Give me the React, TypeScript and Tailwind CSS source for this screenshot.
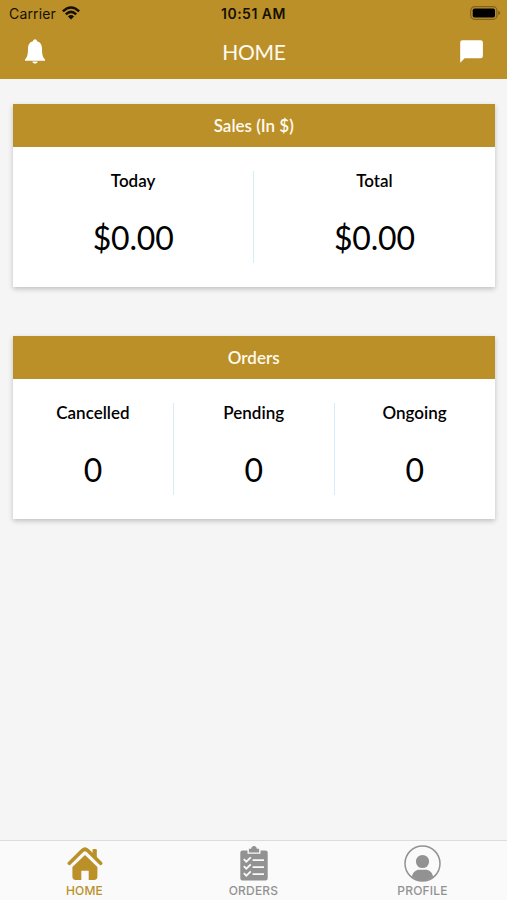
import React from "react";

function WifiIcon() {
  return (
    <svg width="18" height="14" viewBox="0 0 18 14" fill="none" stroke="#151003" strokeWidth="2.5">
      <path d="M0.9 5.3 Q9 -2.4 17.1 5.3" />
      <path d="M3.8 8.3 Q9 3.4 14.2 8.3" />
      <path d="M9 13.6 L5.9 10.4 Q9 7.8 12.1 10.4 Z" fill="#151003" stroke="none" />
    </svg>
  );
}

function BatteryIcon() {
  return (
    <svg width="31" height="14" viewBox="0 0 31 14">
      <rect x="0.7" y="0.7" width="26.2" height="12.6" rx="3.8" fill="none" stroke="#80621d" strokeWidth="1.2" />
      <rect x="2.7" y="2.5" width="22.3" height="9" rx="1.8" fill="#000" />
      <path d="M28.2 4.8 Q30.3 5.6 30.3 7 T28.2 9.2Z" fill="#80621d" />
    </svg>
  );
}

function BellIcon() {
  return (
    <svg width="20" height="25" viewBox="0 0 20 25" fill="#fff">
      <path d="M8 2.3 C8 -0.4 12 -0.4 12 2.3 C15.6 3.3 16.9 6 17 9.7 C17.1 15.7 17.5 17.7 20 20.4 V21.8 H0 V20.4 C2.5 17.7 2.9 15.7 3 9.7 C3.1 6 4.4 3.3 8 2.3Z" />
      <path d="M7.4 22.4 H12.6 C12.3 25.2 7.7 25.2 7.4 22.4Z" />
    </svg>
  );
}

function ChatIcon() {
  return (
    <svg width="23" height="23" viewBox="0 0 23 23" fill="#fff">
      <path d="M2.3 0.3 H20.7 Q22.9 0.3 22.9 2.5 V16 Q22.9 18.2 20.7 18.2 H4.7 L0.2 22.7 V2.5 Q0.2 0.3 2.3 0.3Z" />
    </svg>
  );
}

function HomeIcon() {
  return (
    <svg width="36" height="35" viewBox="0 0 36 35" fill="#bb9028">
      <path d="M2.4 17.3 L15.5 4.3 Q18 2.2 20.5 4.3 L33.6 17.3" fill="none" stroke="#bb9028" strokeWidth="3.7" strokeLinecap="round" />
      <path d="M25.5 4 Q25.5 3 26.7 3 H28.6 Q29.8 3 29.8 4.2 V13 L25.5 9Z" />
      <path d="M18 9 L30.4 21 V30.6 Q30.4 34 27 34 H21.7 V24.8 H14.3 V34 H8.8 Q5.4 34 5.4 30.6 V21Z" />
    </svg>
  );
}

function OrdersIcon() {
  return (
    <svg width="28" height="35" viewBox="0 0 28 35" fill="#929292">
      <path d="M2.5 4.4 H7.5 V7.8 H20.5 V4.4 H25.5 Q27.7 4.4 27.7 6.6 V32.3 Q27.7 34.5 25.5 34.5 H2.5 Q0.3 34.5 0.3 32.3 V6.6 Q0.3 4.4 2.5 4.4Z" />
      <path d="M8.9 2.8 H11.2 Q11.6 0 14 0 T16.8 2.8 H19.1 V6.6 H8.9Z" />
      <g fill="none" stroke="#fafafa" strokeWidth="1.8">
        <path d="M3.8 13.2 L6.3 15.7 L10.8 11.3 M12.6 14.2 H24 M3.8 20.2 L6.3 22.7 L10.8 18.3 M12.6 21.2 H24 M3.8 27.2 L6.3 29.7 L10.8 25.3 M12.6 28.2 H24" />
      </g>
    </svg>
  );
}

function ProfileIcon() {
  return (
    <svg width="37" height="37" viewBox="0 0 37 37">
      <circle cx="18.5" cy="18.5" r="17.5" fill="none" stroke="#929292" strokeWidth="1.5" />
      <circle cx="18.5" cy="16.5" r="6.6" fill="#929292" />
      <path d="M7.8 31.6 C9.2 26.8 11.8 24.7 15.4 24.7 H21.6 C25.2 24.7 27.8 26.8 29.2 31.6 Q18.5 40.5 7.8 31.6Z" fill="#929292" />
    </svg>
  );
}

type Stat = { label: string; value: string };

function StatCard({ title, stats }: { title: string; stats: Stat[] }) {
  return (
    <section className="bg-white shadow-[0_2px_5px_rgba(0,0,0,0.22)]">
      <h2 className="flex h-[43px] items-center justify-center bg-[#bb9028] pt-px text-[17px] font-semibold text-[#fffaf0]">
        {title}
      </h2>
      <div className="flex h-[140px] py-6">
        {stats.map((stat, i) => (
          <div
            key={stat.label}
            className={`flex flex-1 flex-col items-center text-black ${i > 0 ? "border-l border-[#d5ecfb]" : ""}`}
          >
            <div className="text-[17px] leading-5 font-semibold">{stat.label}</div>
            <div className="mt-[26px] text-[32px] leading-[42px] tracking-[-0.2px]">{stat.value}</div>
          </div>
        ))}
      </div>
    </section>
  );
}

export default function App() {
  return (
    <div className="flex h-[900px] w-[507px] flex-col bg-[#f5f5f5] font-[Lato,sans-serif]">
      <header className="h-[79px] bg-[#bb9028]">
        <div className="grid h-[26px] grid-cols-3 items-center pr-[6px] pl-[9px] font-[Inter,sans-serif] text-[14px] text-[#151003]">
          <div className="flex items-center gap-[6px]">
            <span className="tracking-[0.15px]">Carrier</span>
            <WifiIcon />
          </div>
          <span className="-ml-[3px] text-center font-semibold tracking-[0.5px] whitespace-nowrap">10:51 AM</span>
          <div className="flex justify-end">
            <BatteryIcon />
          </div>
        </div>
        <div className="grid h-[51px] grid-cols-3 items-center pr-6 pl-[25px]">
          <BellIcon />
          <h1 className="text-center text-[21px] tracking-[-0.3px] text-[#fffaf0]">HOME</h1>
          <div className="flex justify-end">
            <ChatIcon />
          </div>
        </div>
      </header>
      <main className="flex flex-1 flex-col gap-[49px] px-[12.5px] pt-[24.5px] pl-[13px]">
        <StatCard
          title="Sales (In $)"
          stats={[
            { label: "Today", value: "$0.00" },
            { label: "Total", value: "$0.00" },
          ]}
        />
        <StatCard
          title="Orders"
          stats={[
            { label: "Cancelled", value: "0" },
            { label: "Pending", value: "0" },
            { label: "Ongoing", value: "0" },
          ]}
        />
      </main>
      <nav className="grid h-[60px] grid-cols-3 border-t border-[#dcdcdc] bg-[#fafafa] font-[Inter,sans-serif] text-[12px] leading-4 font-medium tracking-[0.2px] text-[#929292]">
        <div className="flex flex-col items-center text-[#bb9028]">
          <div className="flex h-[42px] items-center pt-[3px]"><HomeIcon /></div>
          <span>HOME</span>
        </div>
        <div className="flex flex-col items-center">
          <div className="flex h-[42px] items-center pt-[3px]"><OrdersIcon /></div>
          <span>ORDERS</span>
        </div>
        <div className="flex flex-col items-center">
          <div className="flex h-[42px] items-center pt-[3px]"><ProfileIcon /></div>
          <span>PROFILE</span>
        </div>
      </nav>
    </div>
  );
}
